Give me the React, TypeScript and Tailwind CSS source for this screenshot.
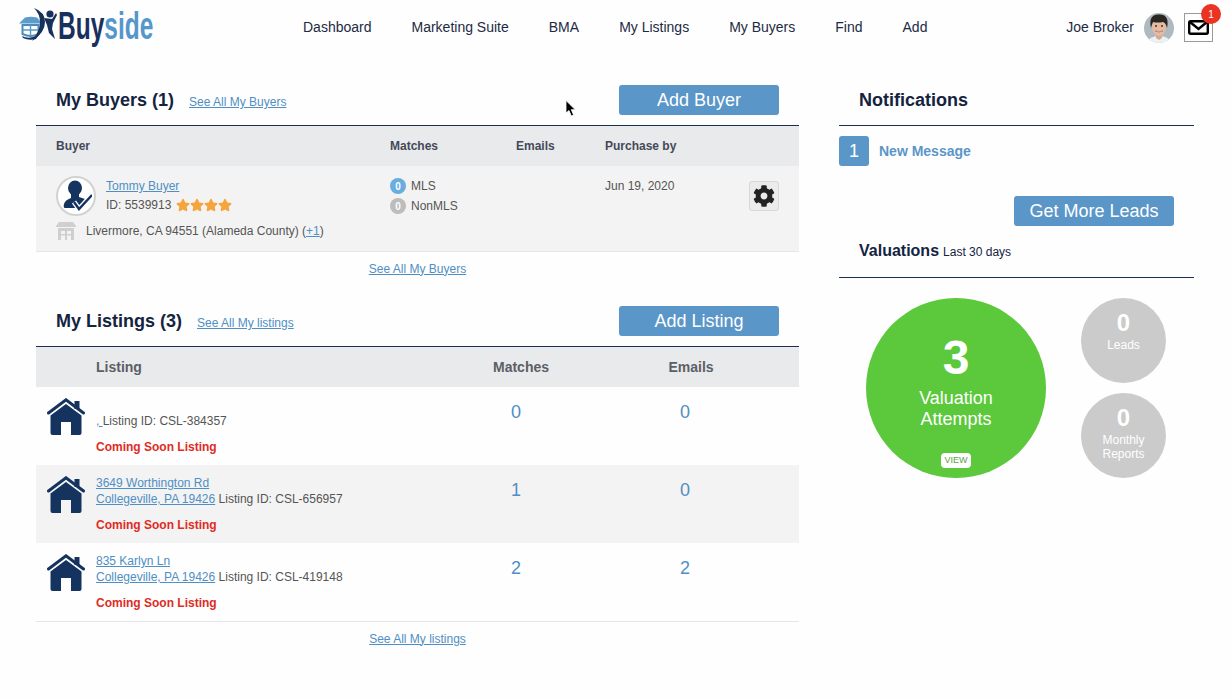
import { FaCog, FaStar } from "react-icons/fa";

const navItems = ["Dashboard", "Marketing Suite", "BMA", "My Listings", "My Buyers", "Find", "Add"];

const listings = [
    { id: "CSL-384357", street: "", city: "", matches: 0, emails: 0, shaded: false },
    { id: "CSL-656957", street: "3649 Worthington Rd", city: "Collegeville, PA 19426", matches: 1, emails: 0, shaded: true },
    { id: "CSL-419148", street: "835 Karlyn Ln", city: "Collegeville, PA 19426", matches: 2, emails: 2, shaded: false },
];

const Logo = () => (
    <div className="flex items-center w-[136px] h-[40px] ml-[19px] mt-[-3px]">
        <svg width="39" height="36" viewBox="0 0 39 36" className="shrink-0">
            <path d="M0 15.5 L6 9.5 Q12 8 18 9.5 L23 15.5 Z" fill="#5b9ccb" />
            <path d="M3.5 17 H19.5 V26 Q12 30 3.5 26 Z" fill="#fff" stroke="#4a8abc" strokeWidth="2" />
            <path d="M11.5 17 V28 M4 22 H19" stroke="#5b9ccb" strokeWidth="1.5" />
            <path d="M3 28 Q10 32 19 27 L17 31 Q10 33 4 30 Z" fill="#17305c" />
            <path d="M15 0 Q26 4 26 14 Q26 25 13 33 Q21 23 21 14 Q21 6 15 0 Z" fill="#17305c" />
            <circle cx="31" cy="6" r="3.6" fill="#17305c" />
            <path d="M25 10 L33 11 L37 5 L38 7 L34 15 L33 21 L36 31 L30 25 L28 17 Z" fill="#17305c" />
        </svg>
        <div className="w-[96px] shrink-0 whitespace-nowrap origin-left scale-x-[0.645] text-[38px] font-bold leading-none font-['Liberation_Sans',sans-serif]">
            <span className="text-[#17305c]">Buy</span>
            <span className="text-[#5597cb]">side</span>
        </div>
    </div>
);

const BrokerFace = () => (
    <svg width="30" height="30" viewBox="0 0 30 30" className="rounded-full shrink-0">
        <rect width="30" height="30" fill="#aeb9c0" />
        <path d="M3 30 Q5 23 15 23 Q25 23 27 30 Z" fill="#eef1f3" />
        <path d="M12 20 H18 V25 L15 27 L12 25 Z" fill="#d8a98f" />
        <ellipse cx="15" cy="14" rx="7" ry="9" fill="#e6bba3" />
        <path d="M7 15 Q4 2 14 1.5 Q26 0.5 23 15 Q22 10 19 9 Q13 10 9 9 Q8 11 7 15 Z" fill="#2b2622" />
        <path d="M11 18 Q15 21 19 18 Q15 19 11 18 Z" fill="#fff" stroke="#9c5f50" strokeWidth=".5" />
        <circle cx="12" cy="13" r=".9" fill="#2b2622" />
        <circle cx="18" cy="13" r=".9" fill="#2b2622" />
    </svg>
);

const Header = () => (
    <header className="flex items-center h-[55px]">
        <Logo />
        <nav className="flex gap-[40px] ml-[148px] text-[14px] text-[#1c2a44]">
            {navItems.map((item) => <span key={item}>{item}</span>)}
        </nav>
        <div className="flex items-center ml-auto mr-[19px]">
            <span className="text-[14px] text-[#1c2a44] mr-[10px]">Joe Broker</span>
            <BrokerFace />
            <div className="relative ml-[10px] w-[29px] h-[29px] border border-[#9a9a9a] flex items-center justify-center">
                <svg width="21" height="15" viewBox="0 0 21 15">
                    <rect x="1.2" y="1.2" width="18.6" height="12.6" rx="1.5" fill="none" stroke="#000" strokeWidth="2.4" />
                    <path d="M2 2 L10.5 9 L19 2" fill="none" stroke="#000" strokeWidth="2.4" />
                </svg>
                <span className="absolute -top-[10px] -right-[9px] w-[20px] h-[20px] rounded-full bg-[#ea3323] text-white text-[10px] flex items-center justify-center">1</span>
            </div>
        </div>
    </header>
);

const SectionTitle = ({ title, link, button }: { title: string; link: string; button: string }) => (
    <div className="flex items-center px-[20px] pb-[10px] border-b border-[#1c2f55]">
        <h2 className="text-[18px] font-bold text-[#14233f] leading-[30px]">{title}</h2>
        <a className="ml-[15px] mt-[4px] text-[12px] text-[#4f8fc4] underline">{link}</a>
        <button className="ml-auto w-[160px] h-[30px] rounded-[3px] bg-[#5a96c8] text-white text-[18px]">{button}</button>
    </div>
);

const BuyerAvatar = () => (
    <div className="w-[40px] h-[40px] rounded-full border-2 border-[#d2d2d2] bg-white flex items-center justify-center shrink-0">
        <svg width="32" height="32" viewBox="0 0 32 32">
            <ellipse cx="15" cy="8" rx="7" ry="7.5" fill="#14335f" />
            <path d="M11 13 H19 V17 L25 19 L18 28 H5 Q3 28 4 24 Q5 20 11 18 Z" fill="#14335f" />
            <path d="M14 22 L19 29 L32 15" fill="none" stroke="#fff" strokeWidth="5" />
            <path d="M14 22 L19 29 L32 15" fill="none" stroke="#14335f" strokeWidth="2.4" />
        </svg>
    </div>
);

const StoreIcon = () => (
    <svg width="20" height="18" viewBox="0 0 20 18" className="shrink-0">
        <path d="M3 0 H17 L20 4 V5 H0 V4 Z" fill="#cfcfcf" />
        <path d="M2 6 H18 V18 H2 Z M5 9 V12 H9 V9 Z M11 9 V12 H15 V9 Z M5 13.5 V18 H9 V13.5 Z M11 13.5 V18 H15 V13.5 Z" fill="#cfcfcf" fillRule="evenodd" />
    </svg>
);

const MatchRow = ({ color, label }: { color: string; label: string }) => (
    <div className="flex items-center h-[20px]">
        <span className={`${color} w-[16px] h-[16px] rounded-full text-white text-[10px] font-bold flex items-center justify-center mr-[5px]`}>0</span>
        <span>{label}</span>
    </div>
);

const BuyersTable = () => (
    <div className="text-[12px] text-[#555]">
        <div className="flex items-center h-[40px] bg-[#e9eaeb] font-bold text-[#44495a]">
            <span className="ml-[20px] w-[334px]">Buyer</span>
            <span className="w-[126px]">Matches</span>
            <span className="w-[89px]">Emails</span>
            <span>Purchase by</span>
        </div>
        <div className="flex h-[86px] bg-[#f3f3f3] border-b border-[#e6e6e6] pt-[10px]">
            <div className="ml-[20px] w-[334px]">
                <div className="flex">
                    <BuyerAvatar />
                    <div className="ml-[10px]">
                        <a className="block text-[#4f8fc4] underline leading-[20px]">Tommy Buyer</a>
                        <div className="flex items-center leading-[18px]">
                            ID: 5539913
                            <span className="flex ml-[5px] text-[14px] text-[#f5a53c]">
                                <FaStar /><FaStar /><FaStar /><FaStar />
                            </span>
                        </div>
                    </div>
                </div>
                <div className="flex items-center mt-[6px]">
                    <StoreIcon />
                    <span className="ml-[10px]">Livermore, CA 94551 (Alameda County) (<a className="text-[#4f8fc4] underline">+1</a>)</span>
                </div>
            </div>
            <div className="w-[126px]">
                <MatchRow color="bg-[#6aade0]" label="MLS" />
                <MatchRow color="bg-[#bdbdbd]" label="NonMLS" />
            </div>
            <div className="w-[89px]" />
            <div className="w-[144px] leading-[20px]">Jun 19, 2020</div>
            <button className="w-[30px] h-[30px] mt-[5px] rounded-[3px] border border-[#d8d8d8] bg-[#ebebeb] flex items-center justify-center text-[#222] text-[22px]">
                <FaCog />
            </button>
        </div>
    </div>
);

const HouseIcon = () => (
    <svg width="38" height="38" viewBox="0 0 38 38" className="shrink-0">
        <path d="M1.5 15 L19 1.8 L36.5 15" fill="none" stroke="#14335f" strokeWidth="3" strokeLinecap="round" />
        <rect x="27.5" y="3" width="5" height="8" fill="#14335f" />
        <path d="M3.5 17.5 L19 6 L34.5 17.5 V35 Q34.5 37 32.5 37 H24 V24 H14 V37 H5.5 Q3.5 37 3.5 35 Z" fill="#14335f" />
    </svg>
);

const ListingRow = ({ listing }: { listing: (typeof listings)[number] }) => (
    <div className={`flex h-[78px] text-[12px] text-[#555] ${listing.shaded ? "bg-[#f3f3f3]" : ""}`}>
        <div className="ml-[11px] mt-[11px] w-[49px]"><HouseIcon /></div>
        <div className="w-[340px] pt-[10px] leading-[16px] whitespace-nowrap">
            {listing.street ? (
                <a className="block text-[#4f8fc4] underline">{listing.street}</a>
            ) : <div className="h-[16px]" />}
            <div>
                {listing.city
                    ? <a className="text-[#4f8fc4] underline">{listing.city}</a>
                    : <a className="text-[#4f8fc4] underline">,&nbsp;</a>}
                {listing.city ? " " : ""}Listing ID: {listing.id}
            </div>
            <div className="mt-[10px] font-bold text-[#df2c24]">Coming Soon Listing</div>
        </div>
        <div className="w-[160px] pt-[14px] text-[18px] leading-[22px] text-[#4f8fc4] text-center">{listing.matches}</div>
        <div className="w-[178px] pt-[14px] text-[18px] leading-[22px] text-[#4f8fc4] text-center">{listing.emails}</div>
    </div>
);

const ListingsTable = () => (
    <div>
        <div className="flex items-center h-[40px] bg-[#e9eaeb] font-bold text-[14px] text-[#5b5f66]">
            <span className="ml-[60px] w-[340px]">Listing</span>
            <span className="w-[160px] text-center pl-[10px]">Matches</span>
            <span className="w-[178px] text-center pl-[12px]">Emails</span>
        </div>
        {listings.map((listing) => <ListingRow key={listing.id} listing={listing} />)}
        <div className="border-b border-[#e6e6e6]" />
    </div>
);

const SeeAll = ({ label }: { label: string }) => (
    <div className="h-[35px] pb-[2px] flex items-center justify-center text-[12px] text-[#4f8fc4]">
        <a className="underline">{label}</a>
    </div>
);

const Notifications = () => (
    <div>
        <h2 className="pl-[20px] pb-[10px] text-[18px] font-bold leading-[30px] text-[#14233f] border-b border-[#1c2f55]">Notifications</h2>
        <div className="flex items-center mt-[10px]">
            <span className="w-[30px] h-[30px] rounded-[3px] bg-[#5a96c8] text-white text-[18px] flex items-center justify-center">1</span>
            <a className="ml-[10px] text-[14px] font-bold text-[#5a96c8]">New Message</a>
        </div>
        <div className="flex justify-end mt-[30px] pr-[20px]">
            <button className="w-[160px] h-[30px] rounded-[3px] bg-[#5a96c8] text-white text-[18px]">Get More Leads</button>
        </div>
    </div>
);

const SmallCircle = ({ label }: { label: string }) => (
    <div className="w-[85px] h-[85px] rounded-full bg-[#cbcbcb] text-white flex flex-col items-center text-center">
        <span className="mt-[11px] text-[24px] font-bold leading-[28px]">0</span>
        <span className="mt-[1px] text-[12px] leading-[14px] w-[70px]">{label}</span>
    </div>
);

const Valuations = () => (
    <div className="mt-[10px]">
        <div className="flex items-baseline pl-[20px] h-[42px] pt-[3px] border-b border-[#1c2f55]">
            <h2 className="text-[16px] font-bold text-[#14233f]">Valuations</h2>
            <span className="ml-[4px] text-[12px] text-[#14233f]">Last 30 days</span>
        </div>
        <div className="flex mt-[20px] ml-[27px]">
            <div className="w-[180px] h-[180px] rounded-full bg-[#5cc83c] text-white flex flex-col items-center">
                <span className="mt-[31px] text-[48px] font-bold leading-[58px]">3</span>
                <span className="mt-[1px] text-[18px] leading-[21px] text-center">Valuation<br />Attempts</span>
                <span className="mt-[23px] w-[30px] h-[15px] rounded-[4px] bg-white text-[#5aa347] text-[9px] flex items-center justify-center">VIEW</span>
            </div>
            <div className="flex flex-col gap-[10px] ml-[35px]">
                <SmallCircle label="Leads" />
                <SmallCircle label="Monthly Reports" />
            </div>
        </div>
    </div>
);

const Cursor = () => (
    <svg width="12" height="18" viewBox="0 0 12 18" className="absolute left-[565px] top-[100px]">
        <path d="M1 0.5 L1 13 L4 10.5 L6.3 16 L8.6 15 L6.3 9.7 L10.3 9.7 Z" fill="#000" stroke="#fff" strokeWidth=".8" />
    </svg>
);

const App = () => {
    return (
        <div className="relative w-[1232px] h-[698px] overflow-hidden bg-[#fefefe] font-['Liberation_Sans',Arial,sans-serif]">
            <Header />
            <main className="flex mt-[30px] pl-[36px]">
                <section className="w-[763px]">
                    <SectionTitle title="My Buyers (1)" link="See All My Buyers" button="Add Buyer" />
                    <BuyersTable />
                    <SeeAll label="See All My Buyers" />
                    <div className="mt-[19px]">
                        <SectionTitle title="My Listings (3)" link="See All My listings" button="Add Listing" />
                        <ListingsTable />
                    </div>
                    <SeeAll label="See All My listings" />
                </section>
                <aside className="w-[355px] ml-[40px]">
                    <Notifications />
                    <Valuations />
                </aside>
            </main>
            <Cursor />
        </div>
    );
};

export default App;
